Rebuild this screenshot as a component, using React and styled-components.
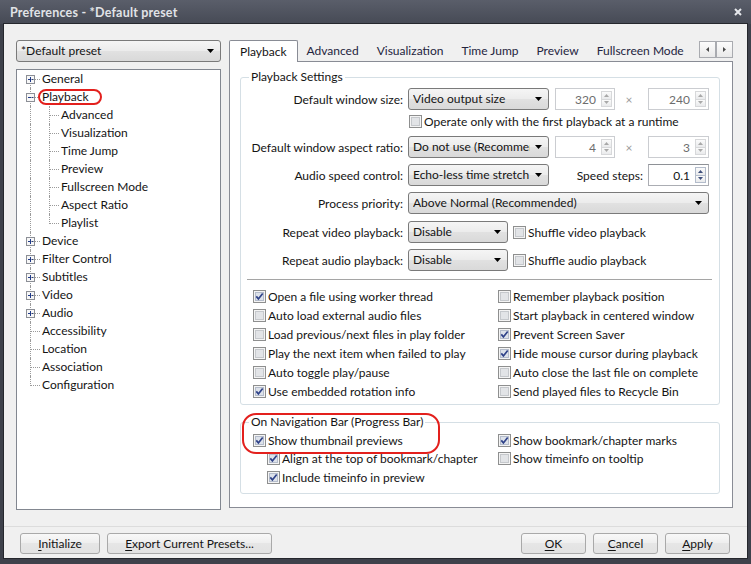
import React from 'react';
import styled, { createGlobalStyle } from 'styled-components';

const GlobalStyle = createGlobalStyle`
  html, body { margin: 0; padding: 0; background: #3e414b; }
  body {
    font-family: Lato, "Open Sans", "Liberation Sans", sans-serif;
    font-size: 12px;
    color: #141414;
  }
  * { box-sizing: border-box; }
`;

const Window = styled.div`
  width: 751px;
  height: 564px;
  display: flex;
  flex-direction: column;
  background: #3e414b;
  overflow: hidden;
`;

const TitleBar = styled.div`
  height: 24px;
  flex-shrink: 0;
  display: flex;
  align-items: center;
  padding: 0 9px 0 10px;
  background: linear-gradient(#5a5e6a, #464a55);
`;

const Title = styled.div`
  flex: 1;
  font-weight: 700;
  font-size: 12.5px;
  color: #e1e3e7;
  letter-spacing: 0.2px;
`;

const Client = styled.div`
  flex: 1;
  margin: 0 4px 6px 4px;
  background: #f0f0f0;
  display: flex;
  flex-direction: column;
  box-shadow: 0 0 0 1px #25272d;
`;

const Main = styled.div`
  height: 486px;
  display: flex;
  padding: 16px 0 0 12px;
`;

const LeftCol = styled.div`
  width: 205px;
  display: flex;
  flex-direction: column;
  gap: 7px;
`;

const RightCol = styled.div`
  width: 504px;
  margin-left: 8px;
  display: flex;
  flex-direction: column;
`;

/* ---------- Combo box ---------- */
const Select = styled.div`
  ${p => (p.$grow ? 'flex: 1;' : `width: ${p.$w}px;`)}
  flex-shrink: 0;
  height: 22px;
  display: flex;
  align-items: center;
  border: 1px solid #7a7a7a;
  border-radius: 3px;
  background: linear-gradient(#f5f5f5, #ececec 48%, #e1e1e1 52%, #d9d9d9);
  padding-left: 4px;
  overflow: hidden;
`;

const SelectText = styled.div`
  flex: 1;
  overflow: hidden;
  white-space: nowrap;
  line-height: 20px;
`;

const SelectArrow = styled.div`
  width: 18px;
  height: 100%;
  flex-shrink: 0;
  display: flex;
  align-items: center;
  justify-content: center;
  padding-right: 2px;
`;

const ComboBox = ({ w, grow, children }) => (
  <Select $w={w} $grow={grow}>
    <SelectText>{children}</SelectText>
    <SelectArrow>
      <svg width="7" height="4" viewBox="0 0 7 4">
        <path d="M0 0H7L3.5 4Z" fill="#000" />
      </svg>
    </SelectArrow>
  </Select>
);

/* ---------- Tree ---------- */
const Tree = styled.div`
  flex: 1;
  background: #fff;
  border: 1px solid #828790;
`;

const TreeRow = styled.div`
  display: flex;
  height: 18px;
  align-items: stretch;
  line-height: 18px;
  white-space: nowrap;
`;

const Gutter = styled.div`
  position: relative;
  flex-shrink: 0;
  width: ${p => p.$w}px;
  &::before {
    content: '';
    position: absolute;
    display: ${p => (p.$v ? 'block' : 'none')};
    left: ${p => p.$x}px;
    top: ${p => (p.$first ? 9 : 0)}px;
    ${p => (p.$last ? 'height: 10px;' : 'bottom: 0;')}
    border-left: 1px dotted #9a9a9a;
  }
  &::after {
    content: '';
    position: absolute;
    display: ${p => (p.$h ? 'block' : 'none')};
    left: ${p => p.$x + 1}px;
    width: ${p => p.$hw}px;
    top: 9px;
    border-top: 1px dotted #9a9a9a;
  }
`;

const ToggleBox = styled.svg`
  position: absolute;
  left: 9px;
  top: 5px;
`;

const TreeLabel = styled.span`
  position: relative;
`;

const RedMark = styled.div`
  position: absolute;
  border: 2px solid #e3201d;
  pointer-events: none;
`;

const Toggle = ({ open }) => (
  <ToggleBox width="9" height="9" viewBox="0 0 9 9">
    <rect x="0.5" y="0.5" width="8" height="8" fill="#f7f7f7" stroke="#8c8f96" />
    <path d="M2 4.5H7" stroke="#1f3a8a" strokeWidth="1" />
    {!open && <path d="M4.5 2V7" stroke="#1f3a8a" strokeWidth="1" />}
  </ToggleBox>
);

const topItems = [
  { name: 'General', toggle: 'plus' },
  { name: 'Playback', toggle: 'minus', mark: true,
    children: ['Advanced', 'Visualization', 'Time Jump', 'Preview', 'Fullscreen Mode', 'Aspect Ratio', 'Playlist'] },
  { name: 'Device', toggle: 'plus' },
  { name: 'Filter Control', toggle: 'plus' },
  { name: 'Subtitles', toggle: 'plus' },
  { name: 'Video', toggle: 'plus' },
  { name: 'Audio', toggle: 'plus' },
  { name: 'Accessibility' },
  { name: 'Location' },
  { name: 'Association' },
  { name: 'Configuration' },
];

const TreeView = () => (
  <Tree>
    {topItems.map((it, i) => (
      <React.Fragment key={it.name}>
        <TreeRow>
          <Gutter $w={25} $x={13} $v $h $hw={9} $first={i === 0} $last={i === topItems.length - 1}>
            {it.toggle && <Toggle open={it.toggle === 'minus'} />}
          </Gutter>
          <TreeLabel>
            {it.name}
            {it.mark && <RedMark style={{ left: -4, right: -13, top: 1, bottom: 1, borderRadius: 9 }} />}
          </TreeLabel>
        </TreeRow>
        {it.children &&
          it.children.map((c, j) => (
            <TreeRow key={c}>
              <Gutter $w={19} $x={13} $v />
              <Gutter $w={25} $x={13} $v $h $hw={9} $last={j === it.children.length - 1} />
              <TreeLabel>{c}</TreeLabel>
            </TreeRow>
          ))}
      </React.Fragment>
    ))}
  </Tree>
);

/* ---------- Tabs ---------- */
const TabStrip = styled.div`
  height: 22px;
  display: flex;
  align-items: stretch;
  position: relative;
  z-index: 1;
`;

const Tab = styled.div`
  padding: 0 ${p => (p.$active ? 10 : 9)}px ${p => (p.$active ? 0 : 2)}px;
  display: flex;
  align-items: center;
  white-space: nowrap;
  color: ${p => (p.$active ? '#141414' : '#24243e')};
  ${p =>
    p.$active &&
    `
    background: #fff;
    border: 1px solid #898c95;
    border-bottom: none;
    border-radius: 2px 2px 0 0;
  `}
`;

const TabScroll = styled.div`
  margin-left: auto;
  align-self: flex-start;
  margin-top: 1px;
  display: flex;
`;

const ScrollBtn = styled.div`
  width: 17px;
  height: 17px;
  border: 1px solid #a9abb0;
  background: linear-gradient(#fcfcfc, #e9e9e9);
  display: flex;
  align-items: center;
  justify-content: center;
`;

const Panel = styled.div`
  flex: 1;
  margin-top: -1px;
  margin-bottom: 2px;
  background: #fff;
  border: 1px solid #898c95;
  padding: 15px 12px 0 10px;
`;

/* ---------- Group boxes ---------- */
const Group = styled.div`
  position: relative;
  border: 1px solid #d5dfe5;
  border-radius: 3px;
  margin-top: ${p => p.$mt || 0}px;
  padding-bottom: ${p => p.$pb || 0}px;
`;

const Legend = styled.div`
  width: fit-content;
  height: 16px;
  line-height: 16px;
  margin: -9px 0 0 8px;
  padding: 0 2px;
  background: #fff;
  white-space: nowrap;
`;

const FormRow = styled.div`
  display: flex;
  align-items: center;
  height: 22px;
  margin-top: ${p => p.$mt || 0}px;
  padding-right: 10px;
`;

const FieldLabel = styled.div`
  width: 167px;
  flex-shrink: 0;
  text-align: right;
  padding-right: 5px;
  white-space: nowrap;
`;

const InlineLabel = styled.div`
  margin-left: auto;
  margin-right: 5px;
  white-space: nowrap;
`;

const Times = styled.div`
  width: 8px;
  margin-left: ${p => p.$ml}px;
  margin-right: ${p => p.$mr}px;
  text-align: center;
  color: #9a9a9a;
`;

const Separator = styled.div`
  margin: 8px 7px 0 6px;
  border-top: 1px solid #a5a5a5;
`;

const CheckGrid = styled.div`
  display: grid;
  grid-template-columns: 245px 1fr;
  grid-auto-rows: ${p => p.$rh}px;
  margin-top: ${p => p.$mt}px;
  padding-left: 12px;
`;

/* ---------- Spinner ---------- */
const SpinBox = styled.div`
  width: ${p => p.$w}px;
  height: 22px;
  flex-shrink: 0;
  margin-left: ${p => p.$ml || 0}px;
  display: flex;
  border: 1px solid ${p => (p.$disabled ? '#cbcdd1' : '#abadb3')};
  ${p => !p.$disabled && 'border-top-color: #8e9196;'}
  background: #fff;
  padding: 2px 2px 2px 0;
`;

const SpinValue = styled.div`
  flex: 1;
  text-align: right;
  padding-right: 5px;
  line-height: 17px;
  color: ${p => (p.$disabled ? '#6d6d6d' : '#141414')};
`;

const SpinButtons = styled.div`
  width: 11px;
  display: flex;
  flex-direction: column;
`;

const SpinBtn = styled.div`
  flex: 1;
  display: flex;
  align-items: center;
  justify-content: center;
  border: 1px solid ${p => (p.$disabled ? '#d7d8da' : '#b3bccb')};
  background: linear-gradient(#fbfbfb, #e9eaec);
  & + & { margin-top: -1px; }
`;

const Spinner = ({ w, ml, value, disabled }) => {
  const c = disabled ? '#a8a8a8' : '#3e4f7c';
  return (
    <SpinBox $w={w} $ml={ml} $disabled={disabled}>
      <SpinValue $disabled={disabled}>{value}</SpinValue>
      <SpinButtons>
        <SpinBtn $disabled={disabled}>
          <svg width="5" height="3" viewBox="0 0 5 3"><path d="M0 3H5L2.5 0Z" fill={c} /></svg>
        </SpinBtn>
        <SpinBtn $disabled={disabled}>
          <svg width="5" height="3" viewBox="0 0 5 3"><path d="M0 0H5L2.5 3Z" fill={c} /></svg>
        </SpinBtn>
      </SpinButtons>
    </SpinBox>
  );
};

/* ---------- Checkbox ---------- */
const CheckRow = styled.div`
  display: flex;
  align-items: center;
  gap: 2px;
  white-space: nowrap;
  margin-left: ${p => p.$ml || 0}px;
`;

const Check = ({ checked, children, ml }) => (
  <CheckRow $ml={ml}>
    <svg width="13" height="13" viewBox="0 0 13 13" style={{ flexShrink: 0 }}>
      <rect x="0.5" y="0.5" width="12" height="12" fill="#f4f4f4" stroke="#8e8f8f" />
      <rect x="2.5" y="2.5" width="8" height="8" fill={checked ? '#dde2ea' : '#e2e4e7'} stroke={checked ? '#b4bccb' : '#c5c8cc'} />
      {checked && (
        <path d="M3.3 6.4L5.4 8.9L9.7 3.4" fill="none" stroke="#2f4289" strokeWidth="1.7" />
      )}
    </svg>
    <span>{children}</span>
  </CheckRow>
);

/* ---------- Footer ---------- */
const Footer = styled.div`
  margin-top: 16px;
  border-top: 1px solid #dcdcdc;
  padding: 6px 17px 4px 16px;
  display: flex;
  gap: 7px;
`;

const Spacer = styled.div`
  flex: 1;
`;

const Button = styled.div`
  width: ${p => p.$w}px;
  height: 21px;
  border: 1px solid #a9a9a9;
  border-radius: 3px;
  background: linear-gradient(#f8f8f8, #eeeeee 50%, #e6e6e6 50%, #e2e2e2);
  display: flex;
  align-items: center;
  justify-content: center;
  white-space: nowrap;
`;

const U = styled.span`
  text-decoration: underline;
  text-underline-offset: 2px;
`;

export default function App() {
  return (
    <>
      <GlobalStyle />
      <Window>
        <TitleBar>
          <Title>Preferences - *Default preset</Title>
          <svg width="8" height="8" viewBox="0 0 8 8">
            <path d="M1 1L7 7M7 1L1 7" stroke="#e6e8ec" strokeWidth="2" />
          </svg>
        </TitleBar>
        <Client>
          <Main>
            <LeftCol>
              <ComboBox w={205}>*Default preset</ComboBox>
              <TreeView />
            </LeftCol>
            <RightCol>
              <TabStrip>
                <Tab $active>Playback</Tab>
                <Tab>Advanced</Tab>
                <Tab>Visualization</Tab>
                <Tab>Time Jump</Tab>
                <Tab>Preview</Tab>
                <Tab>Fullscreen Mode</Tab>
                <TabScroll>
                  <ScrollBtn>
                    <svg width="3" height="5" viewBox="0 0 3 5"><path d="M3 0V5L0 2.5Z" fill="#4a4a4a" /></svg>
                  </ScrollBtn>
                  <ScrollBtn>
                    <svg width="3" height="5" viewBox="0 0 3 5"><path d="M0 0V5L3 2.5Z" fill="#4a4a4a" /></svg>
                  </ScrollBtn>
                </TabScroll>
              </TabStrip>
              <Panel>
                <Group $pb={3}>
                  <Legend>Playback Settings</Legend>
                  <FormRow $mt={3}>
                    <FieldLabel>Default window size:</FieldLabel>
                    <ComboBox w={141}>Video output size</ComboBox>
                    <Spinner w={60} ml={6} value="320" disabled />
                    <Times $ml={10} $mr={15}>×</Times>
                    <Spinner w={61} value="240" disabled />
                  </FormRow>
                  <FormRow>
                    <FieldLabel />
                    <Check ml={1}>Operate only with the first playback at a runtime</Check>
                  </FormRow>
                  <FormRow $mt={4}>
                    <FieldLabel>Default window aspect ratio:</FieldLabel>
                    <ComboBox w={141}>Do not use (Recommended)</ComboBox>
                    <Spinner w={60} ml={6} value="4" disabled />
                    <Times $ml={10} $mr={15}>×</Times>
                    <Spinner w={61} value="3" disabled />
                  </FormRow>
                  <FormRow $mt={6}>
                    <FieldLabel>Audio speed control:</FieldLabel>
                    <ComboBox w={141}>Echo-less time stretch</ComboBox>
                    <InlineLabel>Speed steps:</InlineLabel>
                    <Spinner w={61} value="0.1" />
                  </FormRow>
                  <FormRow $mt={6}>
                    <FieldLabel>Process priority:</FieldLabel>
                    <ComboBox grow>Above Normal (Recommended)</ComboBox>
                  </FormRow>
                  <FormRow $mt={7}>
                    <FieldLabel>Repeat video playback:</FieldLabel>
                    <ComboBox w={100}>Disable</ComboBox>
                    <Check ml={5}>Shuffle video playback</Check>
                  </FormRow>
                  <FormRow $mt={6}>
                    <FieldLabel>Repeat audio playback:</FieldLabel>
                    <ComboBox w={100}>Disable</ComboBox>
                    <Check ml={5}>Shuffle audio playback</Check>
                  </FormRow>
                  <Separator />
                  <CheckGrid $rh={19} $mt={7}>
                    <Check checked>Open a file using worker thread</Check>
                    <Check>Remember playback position</Check>
                    <Check>Auto load external audio files</Check>
                    <Check>Start playback in centered window</Check>
                    <Check>Load previous/next files in play folder</Check>
                    <Check checked>Prevent Screen Saver</Check>
                    <Check>Play the next item when failed to play</Check>
                    <Check checked>Hide mouse cursor during playback</Check>
                    <Check>Auto toggle play/pause</Check>
                    <Check>Auto close the last file on complete</Check>
                    <Check checked>Use embedded rotation info</Check>
                    <Check>Send played files to Recycle Bin</Check>
                  </CheckGrid>
                </Group>
                <Group $mt={17} $pb={6}>
                  <Legend>On Navigation Bar (Progress Bar)</Legend>
                  <CheckGrid $rh={18.5} $mt={1}>
                    <Check checked>Show thumbnail previews</Check>
                    <Check checked>Show bookmark/chapter marks</Check>
                    <Check checked ml={14}>Align at the top of bookmark/chapter</Check>
                    <Check>Show timeinfo on tooltip</Check>
                    <Check checked ml={14}>Include timeinfo in preview</Check>
                  </CheckGrid>
                  <RedMark style={{ left: 1, top: -10, width: 198, height: 41, borderRadius: 14 }} />
                </Group>
              </Panel>
            </RightCol>
          </Main>
          <Footer>
            <Button $w={80}><U>I</U>nitialize</Button>
            <Button $w={165}><U>E</U>xport Current Presets...</Button>
            <Spacer />
            <Button $w={65}><U>O</U>K</Button>
            <Button $w={65}><U>C</U>ancel</Button>
            <Button $w={65}><U>A</U>pply</Button>
          </Footer>
        </Client>
      </Window>
    </>
  );
}
